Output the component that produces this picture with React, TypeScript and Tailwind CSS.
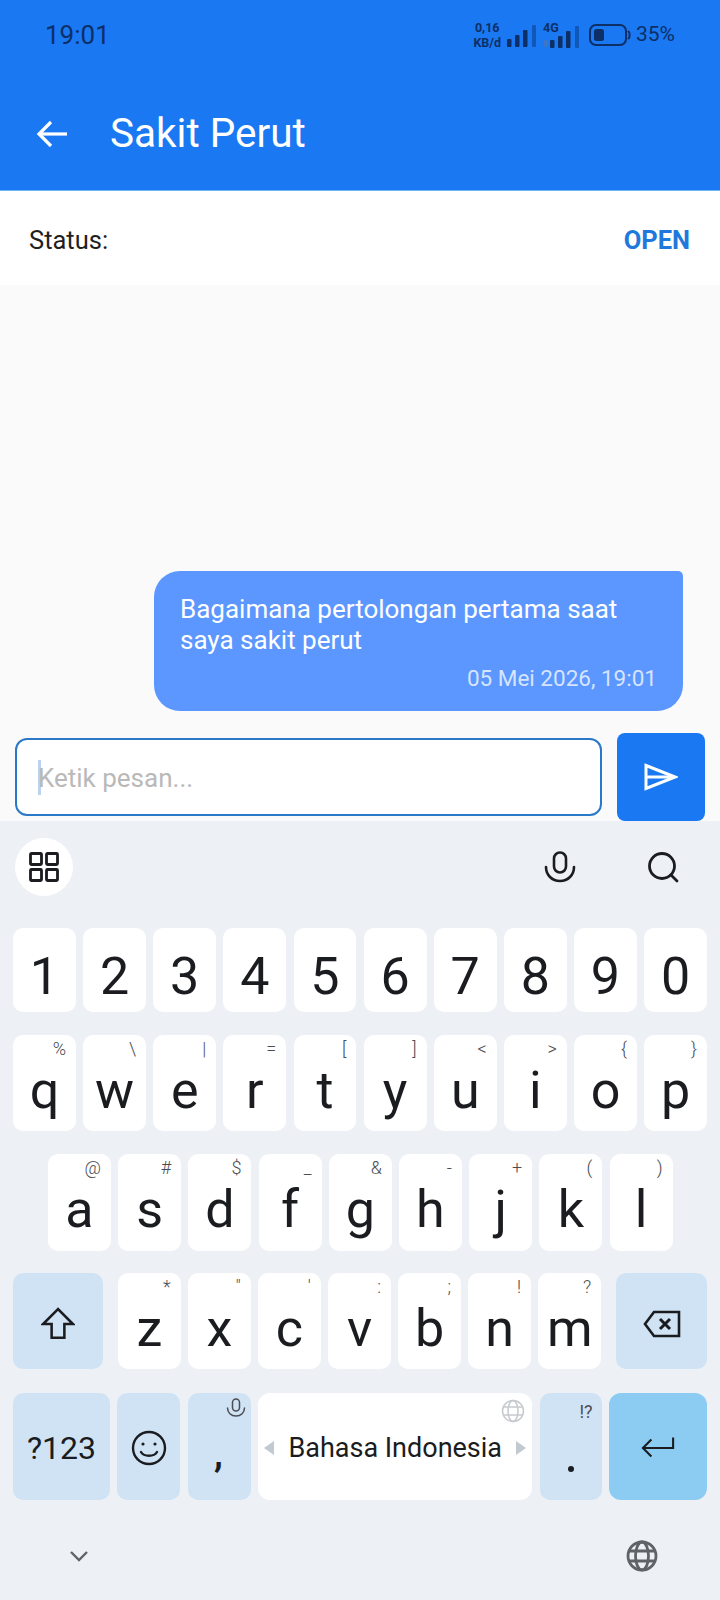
const font = "font-['Roboto',sans-serif]";

type LetterKey = { label: string; hint: string };

const digits = ["1", "2", "3", "4", "5", "6", "7", "8", "9", "0"];

const rowQ: LetterKey[] = [
  { label: "q", hint: "%" },
  { label: "w", hint: "\\" },
  { label: "e", hint: "|" },
  { label: "r", hint: "=" },
  { label: "t", hint: "[" },
  { label: "y", hint: "]" },
  { label: "u", hint: "<" },
  { label: "i", hint: ">" },
  { label: "o", hint: "{" },
  { label: "p", hint: "}" },
];

const rowA: LetterKey[] = [
  { label: "a", hint: "@" },
  { label: "s", hint: "#" },
  { label: "d", hint: "$" },
  { label: "f", hint: "_" },
  { label: "g", hint: "&" },
  { label: "h", hint: "-" },
  { label: "j", hint: "+" },
  { label: "k", hint: "(" },
  { label: "l", hint: ")" },
];

const rowZ: LetterKey[] = [
  { label: "z", hint: "*" },
  { label: "x", hint: '"' },
  { label: "c", hint: "'" },
  { label: "v", hint: ":" },
  { label: "b", hint: ";" },
  { label: "n", hint: "!" },
  { label: "m", hint: "?" },
];

function Letter({ label, hint }: LetterKey) {
  return (
    <div className="relative flex h-full w-[63px] items-center justify-center rounded-[10px] bg-white pt-[15px] text-[52px] leading-none text-[#1a1c20]">
      {label}
      <span className="absolute right-[10px] top-[2px] text-[18px] font-light leading-[24px] text-[#4a4d52]">{hint}</span>
    </div>
  );
}

function SignalBars({ className }: { className: string }) {
  return (
    <svg viewBox="0 0 29 22" className={className} fill="#0d2f66">
      <rect x="0" y="14" width="4.5" height="8" rx="1" />
      <rect x="8" y="10" width="4.5" height="12" rx="1" />
      <rect x="16" y="5" width="4.5" height="17" rx="1" />
      <rect x="25" y="0" width="4" height="22" rx="1" fill="#0f57b8" />
    </svg>
  );
}

function StatusBar() {
  return (
    <div className="flex h-[68px] items-center pl-[45px] pr-[45px] pt-[1px] text-[#0d2f66]">
      <span className="text-[26px] leading-none">19:01</span>
      <div className="ml-auto flex items-center">
        <div className="flex flex-col items-center text-[12.5px] font-bold leading-[15px]">
          <span>0,16</span>
          <span>KB/d</span>
        </div>
        <SignalBars className="ml-[6px] mt-[2px] h-[22px] w-[29px]" />
        <div className="relative ml-[7px] h-[24px] w-[36px]">
          <span className="absolute left-0 top-[-3px] text-[12.5px] font-bold leading-[15px]">4G</span>
          <span className="absolute bottom-0 left-[1px] h-[7px] w-[4px] rounded-[1px] bg-[#3f76c4]" />
          <SignalBars className="absolute bottom-[-1px] right-0 h-[22px] w-[29px]" />
        </div>
        <svg viewBox="0 0 42 22" className="ml-[10px] h-[22px] w-[42px]" fill="none">
          <rect x="1" y="1" width="36" height="20" rx="6" stroke="#0d2f66" strokeWidth="2" />
          <rect x="5" y="5" width="10" height="12" rx="2.5" fill="#0d2f66" />
          <path d="M39.5 7.5c1.5 1 1.5 6 0 7" stroke="#0d2f66" strokeWidth="2" strokeLinecap="round" />
        </svg>
        <span className="ml-[5px] text-[21px] leading-none">35%</span>
      </div>
    </div>
  );
}

function SendIcon() {
  return (
    <svg viewBox="0 0 34 28" className="h-[28px] w-[34px]" fill="none" stroke="white" strokeWidth="3" strokeLinejoin="miter">
      <path d="M2 2.5l29 11.5L2 25.5z" />
      <path d="M2 14h27" />
    </svg>
  );
}

function Keyboard() {
  return (
    <div className="flex flex-1 flex-col bg-[#edf0f5] px-[13px]">
      <div className="flex h-[107px] items-center pb-[15px]">
        <div className="ml-[2px] flex h-[58px] w-[58px] items-center justify-center rounded-full bg-white">
          <svg viewBox="0 0 30 30" className="h-[30px] w-[30px]" fill="none" stroke="#1a1c20" strokeWidth="2.8">
            <rect x="1.5" y="1.5" width="11" height="11" rx="1" />
            <rect x="17.5" y="1.5" width="11" height="11" rx="1" />
            <rect x="1.5" y="17.5" width="11" height="11" rx="1" />
            <rect x="17.5" y="17.5" width="11" height="11" rx="1" />
          </svg>
        </div>
        <svg viewBox="0 0 32 32" className="ml-[471px] h-[32px] w-[32px]" fill="none" stroke="#1a1c20" strokeWidth="2.6" strokeLinecap="round">
          <rect x="10" y="1.5" width="12" height="20" rx="6" />
          <path d="M2 16c0 8 6 14 14 14s14-6 14-14" />
        </svg>
        <svg viewBox="0 0 32 32" className="ml-[71px] h-[32px] w-[32px]" fill="none" stroke="#1a1c20" strokeWidth="2.8" strokeLinecap="round">
          <circle cx="15" cy="15" r="12.5" />
          <path d="M24 24l6 6" />
        </svg>
      </div>

      <div className="flex h-[84px] gap-[7.2px]">
        {digits.map((d) => (
          <div key={d} className="flex h-full w-[63px] items-center justify-center rounded-[10px] bg-white pt-[13px] text-[52px] leading-none text-[#1a1c20]">
            {d}
          </div>
        ))}
      </div>

      <div className="mt-[23px] flex h-[96px] gap-[7.2px]">
        {rowQ.map((k) => (
          <Letter key={k.label} {...k} />
        ))}
      </div>

      <div className="mt-[23px] flex h-[97px] gap-[7.2px] pl-[35px]">
        {rowA.map((k) => (
          <Letter key={k.label} {...k} />
        ))}
      </div>

      <div className="mt-[22px] flex h-[96px] gap-[7.2px]">
        <div className="mr-[7.8px] flex h-full w-[90px] items-center justify-center rounded-[10px] bg-[#d0e3f5] pt-[6px]">
          <svg viewBox="0 0 32 32" className="h-[34px] w-[34px]" fill="none" stroke="#1a1c20" strokeWidth="2.4" strokeLinejoin="miter">
            <path d="M16 2L2 16h8v13h12V16h8z" />
          </svg>
        </div>
        {rowZ.map((k) => (
          <Letter key={k.label} {...k} />
        ))}
        <div className="ml-[7.8px] flex h-full w-[91px] items-center justify-center rounded-[10px] bg-[#d0e3f5] pt-[6px]">
          <svg viewBox="0 0 38 28" className="h-[28px] w-[38px]" fill="none" stroke="#1a1c20" strokeWidth="2.6">
            <path d="M11 2h25v24H11L2 14z" />
            <path d="M17 9l10 10M27 9L17 19" strokeWidth="3" />
          </svg>
        </div>
      </div>

      <div className="mt-[24px] flex h-[107px] gap-[7.5px] text-[#1a1c20]">
        <div className="flex h-full w-[97px] items-center justify-center rounded-[10px] bg-[#d0e3f5] pt-[3px] text-[32px] leading-none">?123</div>
        <div className="flex h-full w-[63px] items-center justify-center rounded-[10px] bg-[#d0e3f5] pt-[3px]">
          <svg viewBox="0 0 36 36" className="h-[36px] w-[36px]" fill="none" stroke="#1a1c20" strokeWidth="2.4" strokeLinecap="round">
            <circle cx="18" cy="18" r="16" />
            <circle cx="12" cy="14" r="1.6" fill="#1a1c20" stroke="none" />
            <circle cx="24" cy="14" r="1.6" fill="#1a1c20" stroke="none" />
            <path d="M10 22c3 5 13 5 16 0" />
          </svg>
        </div>
        <div className="relative flex h-full w-[63px] items-center justify-center rounded-[10px] bg-[#d0e3f5] pr-[2px] pt-[14px] text-[36px] font-bold leading-none">
          ,
          <svg viewBox="0 0 20 20" className="absolute right-[5px] top-[5px] h-[20px] w-[20px]" fill="none" stroke="#4a4d52" strokeWidth="1.5" strokeLinecap="round">
            <rect x="6.5" y="1" width="7" height="12" rx="3.5" />
            <path d="M1.5 10c0 4.5 3.5 8 8.5 8s8.5-3.5 8.5-8" />
          </svg>
        </div>
        <div className="relative flex h-full w-[274px] items-center justify-center gap-[14px] rounded-[12px] bg-white pt-[3px] text-[27px] leading-none">
          <span className="h-0 w-0 border-y-[7px] border-r-[10px] border-y-transparent border-r-[#c3c9d0]" />
          Bahasa Indonesia
          <span className="h-0 w-0 border-y-[7px] border-l-[10px] border-y-transparent border-l-[#c3c9d0]" />
          <svg viewBox="0 0 24 24" className="absolute right-[7px] top-[6px] h-[24px] w-[24px]" fill="none" stroke="#c6c9ce" strokeWidth="1.5">
            <circle cx="12" cy="12" r="10.5" />
            <ellipse cx="12" cy="12" rx="5" ry="10.5" />
            <path d="M2.5 8h19M2.5 16h19" />
          </svg>
        </div>
        <div className="relative flex h-full w-[62px] items-end justify-center rounded-[10px] bg-[#d0e3f5] pb-[28px]">
          <span className="h-[6px] w-[6px] rounded-full bg-[#1a1c20]" />
          <span className="absolute right-[9px] top-[7px] text-[18px] leading-[24px] text-[#4a4d52]">!?</span>
        </div>
        <div className="flex h-full w-[98px] items-center justify-center rounded-[12px] bg-[#8ccbf2]">
          <svg viewBox="0 0 36 22" className="h-[22px] w-[34px]" fill="none" stroke="#1a1c20" strokeWidth="2.2">
            <path d="M34 1v11H3" />
            <path d="M11 3l-9 9 9 9" />
          </svg>
        </div>
      </div>

      <div className="flex flex-1 items-center justify-between pl-[56px] pr-[49px] pt-[11px]">
        <svg viewBox="0 0 20 12" className="h-[12px] w-[20px]" fill="none" stroke="#5f6368" strokeWidth="2.4">
          <path d="M2 2l8 8 8-8" />
        </svg>
        <svg viewBox="0 0 32 32" className="h-[32px] w-[32px]" fill="none" stroke="#5f6368" strokeWidth="2.8">
          <circle cx="16" cy="16" r="14" />
          <ellipse cx="16" cy="16" rx="6.5" ry="14" />
          <path d="M3 11h26M3 21h26" />
        </svg>
      </div>
    </div>
  );
}

export default function App() {
  return (
    <div className={`${font} flex h-[1600px] w-[720px] flex-col overflow-hidden bg-[#fafafa]`}>
      <header className="h-[191px] border-b border-[#6db5f7] bg-[#1a78f2]">
        <StatusBar />
        <div className="flex h-[66px] items-center pl-[36px] pt-[65px]">
          <svg viewBox="0 0 32 28" className="h-[28px] w-[32px]" fill="none" stroke="white" strokeWidth="3.2">
            <path d="M31 14H3" />
            <path d="M15 2L3 14l12 12" />
          </svg>
          <h1 className="ml-[42px] text-[40.5px] leading-none text-white">Sakit Perut</h1>
        </div>
      </header>

      <div className="flex h-[94px] items-center justify-between bg-white pl-[29px] pr-[30px] pt-[4px] text-[25.5px]">
        <span className="text-[#1f1f1f]">Status:</span>
        <span className="font-bold text-[#1f78dc]">OPEN</span>
      </div>

      <main className="flex h-[536px] flex-col justify-end">
        <div className="mb-[22px] ml-[154px] flex h-[140px] w-[529px] flex-col rounded-[26px] rounded-tr-[5px] bg-[#5b97ff] pl-[26px] pr-[26px] pt-[23px]">
          <p className="text-[26px] leading-[31px] text-white">
            Bagaimana pertolongan pertama saat
            <br />
            saya sakit perut
          </p>
          <span className="mt-[9px] self-end text-[22.5px] leading-[26px] text-[#d6e4fd]">05 Mei 2026, 19:01</span>
        </div>
        <div className="flex items-center pl-[15px]">
          <div className="flex h-[78px] w-[587px] items-center rounded-[12px] border-2 border-[#2a78c8] bg-white pl-[21px] text-[26px] text-[#b9b9b9]">
            <span className="h-[35px] w-[3px] bg-[#bcd2ef]" />
            <span className="ml-[-3px] pt-[3px]">Ketik pesan...</span>
          </div>
          <button className="ml-[15px] flex h-[88px] w-[88px] items-center justify-center rounded-[8px] bg-[#1a78f2]">
            <SendIcon />
          </button>
        </div>
      </main>

      <Keyboard />
    </div>
  );
}
